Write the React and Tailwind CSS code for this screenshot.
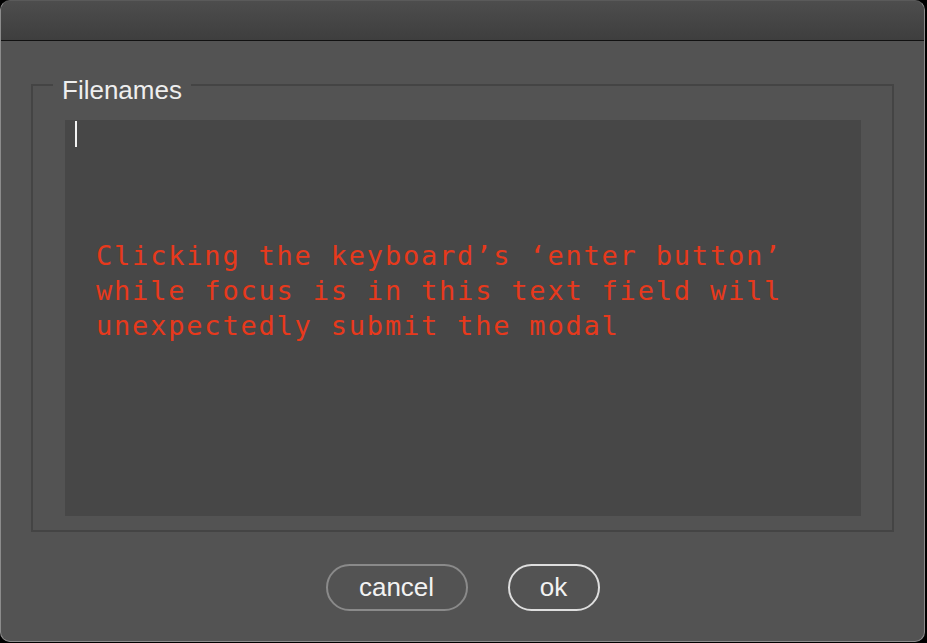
export default function App() {
  return (
    <div className="w-[927px] h-[643px] bg-black overflow-hidden">
      <div className="w-[925px] h-[642px] flex flex-col rounded-[10px] border border-[#8c8c8c] border-t-[#5a5a5a] bg-[#535353] overflow-hidden" style={{ fontFamily: '"Liberation Sans", Arial, sans-serif' }}>
        <div className="h-[40px] shrink-0 bg-gradient-to-b from-[#4d4d4d] to-[#3e3e3e] border-b border-[#111111]" />
        <div className="flex flex-col px-[30px] pt-[43px]">
          <div className="relative border-2 border-[#444444] pt-[34px] pl-[32px] pr-[31px] pb-[14px]">
            <div className="absolute left-[20px] top-[-11px] px-[9px] bg-[#535353] text-[26px] leading-[30px] text-[#eeeeee]">
              Filenames
            </div>
            <div className="relative h-[396px] bg-[#474747] pl-[10px] pt-[1px]">
              <div className="w-[2px] h-[26px] bg-[#f2f2f2]" />
              <div
                className="mt-[91px] ml-[21px] text-[27px] leading-[35px] tracking-[1.8px] text-[#e7391c] whitespace-pre"
                style={{ fontFamily: '"DejaVu Sans Mono", monospace' }}
              >
                {"Clicking the keyboard’s ‘enter button’\nwhile focus is in this text field will\nunexpectedly submit the modal"}
              </div>
            </div>
          </div>
          <div className="flex justify-center gap-[40px] mt-[32px]">
            <button className="w-[142px] h-[47px] rounded-full border-2 border-[#8a8a8a] text-[26px] text-[#f2f2f2] leading-none pb-[2px]">
              cancel
            </button>
            <button className="w-[92px] h-[47px] rounded-full border-2 border-[#dedede] text-[26px] text-[#f2f2f2] leading-none pb-[2px]">
              ok
            </button>
          </div>
        </div>
      </div>
    </div>
  );
}
